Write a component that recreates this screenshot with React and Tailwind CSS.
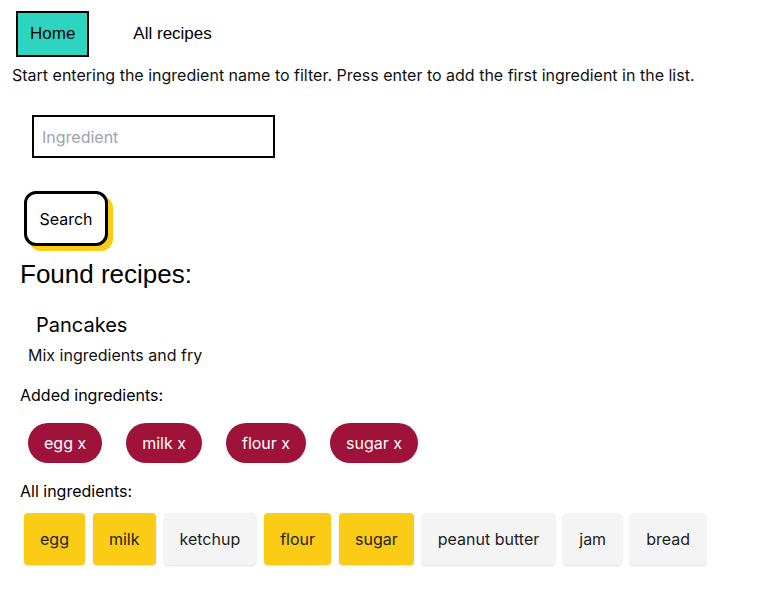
import React, { useState } from 'react';

const allIngredients = ['egg', 'milk', 'ketchup', 'flour', 'sugar', 'peanut butter', 'jam', 'bread'];

export default function App() {
  const [added, setAdded] = useState(['egg', 'milk', 'flour', 'sugar']);
  const [query, setQuery] = useState('');

  const toggle = (name) => {
    setAdded((prev) => (prev.includes(name) ? prev.filter((i) => i !== name) : [...prev, name]));
  };

  return (
    <div className="min-h-[594px] bg-white text-black font-['Inter',sans-serif]">
      {/* Nav */}
      <nav className="flex items-center gap-[30px] pl-4 pt-[11px] font-['Liberation_Sans',Arial,sans-serif] text-[17px]">
        <button className="h-[46px] px-[12px] border-2 border-black bg-[#2dd4bf]">Home</button>
        <button className="h-[46px] px-[12px] border-2 border-transparent">All recipes</button>
      </nav>

      <p className="pl-3 mt-[6px] text-base leading-6 text-[#111]">
        Start entering the ingredient name to filter. Press enter to add the first ingredient in the list.
      </p>

      <div className="pl-8 mt-[28px]">
        <input
          value={query}
          onChange={(e) => setQuery(e.target.value)}
          placeholder="Ingredient"
          className="w-[243px] h-[43px] border-2 border-black px-2 text-base placeholder-[#9ca3af] outline-none"
        />
      </div>

      <div className="pl-6 mt-[33px]">
        <button className="w-[84px] h-[55px] rounded-xl border-[3px] border-black bg-white text-base shadow-[5px_5px_0_#facc15]">
          Search
        </button>
      </div>

      <h2 className="pl-5 mt-[13px] text-[26px] leading-[30px] font-['Liberation_Sans',Arial,sans-serif]">
        Found recipes:
      </h2>

      <div className="mt-[22px]">
        <h3 className="pl-9 text-xl leading-7">Pancakes</h3>
        <p className="pl-7 mt-[6px] text-base leading-5 text-[#111]">Mix ingredients and fry</p>
      </div>

      <p className="pl-5 mt-[18px] text-base leading-6">Added ingredients:</p>
      <div className="flex gap-6 pl-7 mt-4">
        {added.map((name) => (
          <button
            key={name}
            onClick={() => toggle(name)}
            className="h-10 px-4 rounded-full bg-[#9f1239] text-white text-base"
          >
            {name} x
          </button>
        ))}
      </div>

      <p className="pl-5 mt-4 text-base leading-6">All ingredients:</p>
      <div className="flex gap-2 pl-6 mt-[10px]">
        {allIngredients.map((name) => (
          <button
            key={name}
            onClick={() => toggle(name)}
            className={`h-[52px] px-4 rounded text-base text-[#222] shadow-sm ${
              added.includes(name) ? 'bg-[#facc15]' : 'bg-[#f4f4f5]'
            }`}
          >
            {name}
          </button>
        ))}
      </div>
    </div>
  );
}
